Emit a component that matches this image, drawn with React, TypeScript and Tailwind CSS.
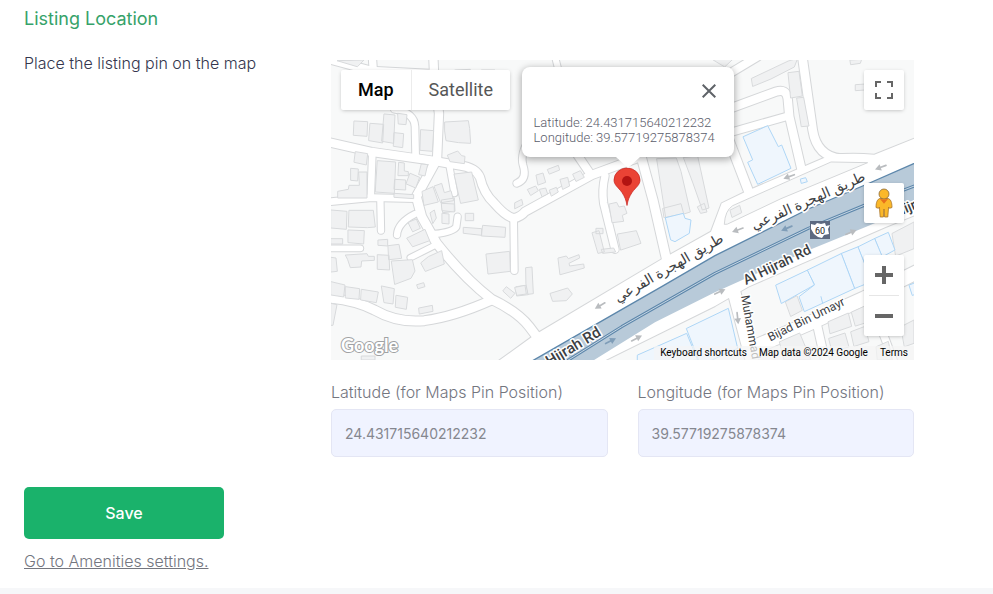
import { useState } from "react";

type Road = { d: string; w: number };

// Street geometry is drawn on a grid three times finer than the map tile.
const roads: Road[] = [
  { d: "M-20 -6 L120 32 L310 42", w: 24 },
  { d: "M124 -10 L127 34", w: 22 },
  { d: "M307 -10 L310 60 L324 160 L318 300", w: 25 },
  { d: "M-10 246 L122 276 L310 303 L385 316 Q435 322 447 352 Q458 400 490 430 Q525 470 548 475 Q570 470 582 455 L782 345 L925 292", w: 25 },
  { d: "M124 280 L119 412", w: 20 },
  { d: "M-10 426 L122 413 L252 416", w: 20 },
  { d: "M148 415 L150 512", w: 19 },
  { d: "M312 308 L256 410 L272 470 L317 550 Q400 655 482 718 Q560 755 595 800 L640 860", w: 27 },
  { d: "M198 525 Q200 488 252 462", w: 19 },
  { d: "M312 522 Q368 515 376 500 L380 470", w: 19 },
  { d: "M238 593 L312 556", w: 17 },
  { d: "M190 148 Q250 158 252 200 L254 290", w: 20 },
  { d: "M356 322 L370 400", w: 18 },
  { d: "M-10 565 L88 565", w: 17 },
  { d: "M-10 714 Q70 720 130 750 Q200 790 280 782 Q370 770 482 720", w: 27 },
  { d: "M548 480 L550 632", w: 20 },
  { d: "M557 370 Q590 358 576 315 Q566 280 600 230", w: 20 },
  { d: "M736 280 L778 342", w: 24 },
  { d: "M822 348 Q812 390 818 430 L852 568", w: 22 },
  { d: "M925 270 L966 420 L1007 600", w: 27 },
  { d: "M1190 230 L1255 400", w: 27 },
  { d: "M1190 148 L1335 95 Q1365 85 1370 115 L1375 170 L1412 330", w: 25 },
  { d: "M1195 218 L1372 168", w: 22 },
  { d: "M1414 -10 L1445 210 Q1458 290 1530 296", w: 26 },
  { d: "M1180 50 L1280 -10", w: 24 },
  { d: "M672 -10 L690 60", w: 18 },
  { d: "M1210 700 L1268 920", w: 38 },
  { d: "M1250 870 L1430 792 L1600 715 L1770 630", w: 42 },
  { d: "M1455 780 L1484 910", w: 24 },
  { d: "M1690 910 L1660 830 Q1640 790 1650 750", w: 22 },
];

const highwayCorridor =
  "M490 912 L612 824 L992 598 L1140 515 L1172 430 L1250 392 L1500 285 Q1560 278 1630 284 L1760 232 L1760 462 L1662 502 L1252 680 L1152 738 L800 912 Z";

const buildings = [
  // north west blocks
  "M70 183l40 2-2 44-40-3z M118 190l40 3-3 56-41-7z M160 162l32 3-4 85-35-6z M190 218l28 3-3 42-27-4z M201 160l27 4-3 30-22-2z",
  "M270 209l38 3-4 62-36-3z M342 186l70-4 4 24 3 44-36-2-38-6-4-28z M350 285l30-12 12 14 10 2-2 22-42-6z",
  "M74 275l36 6-4 34-36-8z M60 325l22 2-2 36-20-2z M84 336h24v78H20v-20l32-6 2-12h30z M140 302l54 4-4 94-56-4z M204 307l16 2v24l12 2v12h-30z M192 358l32 2v30l-34-2z M238 340l28 12-12 32-28-12z M272 312l18 2-8 34-18-4z M370 342l52-6 20 84-52 10z",
  "M274 394l32-14 16 46-42 10z M310 378l22-8 8 28 20-6 8 30-38 6z M332 420l38-6 2 40-36 4z M190 400l58 4v12l-58-4z",
  // west blocks
  "M0 450l48 4-2 54-46-4z M55 451h72l6 50-24 2-56-2z M52 510l48 2-2 40-46-4z M0 536h35v16H0z M0 592l15 2 4 40-19 2z M44 585l64-4 4 8h18v12l-38 2-2 18-32 2-8-24z",
  "M140 584l34 2 2 44-36-2z M172 557l32-4 8 42-38 4z M142 540l28-2v20l-28-2z M182 603l62-4 8 34-12 22-48 18z",
  "M232 487l24-10 12 28-22 10z M228 534l54-26 14 34-50 18z M270 608l22-18 40-18 8 40-56 22z",
  "M0 665l42 10-4 36-38-6z M44 680l42 6-2 32-40-4z M92 688l50 8-6 32-46-8z M152 678l38 8-4 46-26-4z M196 706l34 6-4 36-32-6z M264 744l40-8 2 18-40 8z M258 674l20-6 4 12-20 6z",
  "M332 430l38 2v24l-36-4z M334 460l20 2v30l-20-2z M404 460h24v22h-24z M298 458l12-8 6 24-10 16z M398 502l54 4v20l-54-6z M456 496l68 6-2 30-70-4z M466 582l70-8 2 60-66 8z M516 692l10-12 26 20-12 14z M556 680l30-4 6 28-34 4z",
  // centre blocks
  "M590 388l24-10 8 14-22 14z M616 345l20-6 8 28-22 8z M650 328l32-12 4 14-30 12z M626 388l18-4 6 18-16 8z M656 390l20-8 6 14-20 12z M688 358l22-6 6 26-20 10z M726 342l22-10 12 20-24 12z M552 428l20-10 4 16-24 12z",
  "M835 432l22-5 7 14 16-3 8 22-14 6 4 18-34 4z M860 522l56-10 14 38-60 20z M784 518l20-6 16 64-18 4z M682 594l24-6 6 8 32-12 2 10-32 16 2 8 42-6 2 12-72 20z M585 623l18-2 4 80-16 2-6-30z M552 682l30-6 4 26-28 4z M658 700l52-16 14 18-18 20-40 2z M796 505h20v16h-20z M812 568l36-4 6 12-38 4z",
  "M978 296l58-2 14 40 28 122-72 22z M1058 292l42-4 34 156-20 6-28-80z M996 445l54-14 8 30-58 12z M1100 440l20-10 8 26-18 4z",
  "M1262 55l110-52 28-8-10 26-70 36-54 22z M1372 38l32-4 10 74-34 6z M1398 114l20-2 16 86-22 2z M1574 74l30-2-2 18-28 2z M1558 0l34-2-4 12-28 4z M1198 450l28-14 6 22-28 14z",
  // south east blocks
  "M1364 725l34-18 16 44-34 18z M1684 520l65-34v80l-54 22z M1492 785l60-26 10 40-64 22z M1562 756l44-20 12 48-44 14z M1494 835l48-16 12 42-50 14z M1560 815l42-16 12 46-44 14z M1346 845l60-26 34 81h-80z M1636 860l36-16 12 56h-44z M1710 800l39-20v70l-28 10z",
  "M1148 0l70-14-36 34z M98 0l-80 2 60 18z M372 30l46-2v16h-48z M452 30h40v16h-36z M92 888h40v12H92z M0 730l18 4-12 62H0z",
];

const shops = [
  "M1237 230L1310 197L1342 260L1352 255L1380 325L1280 373L1250 307L1264 300Z",
  "M1004 473L1057 460L1062 475L1080 480L1075 520L1032 545L1020 540Z",
  "M1409 357L1424 353L1429 365L1412 370Z",
  "M1335 675L1430 630L1450 675L1352 730Z",
  "M1430 630L1532 580L1572 685L1420 755L1404 710L1450 675Z",
  "M1532 580L1582 560L1622 665L1572 685Z",
  "M1582 560L1632 535L1665 610L1612 635Z",
  "M1632 535L1672 517L1692 570L1655 590Z",
  "M920 885L1067 820L1100 900L920 915Z",
  "M1067 805L1192 745L1220 865L1110 915Z",
  "M1470 710L1475 730M1735 675L1760 665L1760 700L1745 706Z",
];

// x, y, rotation and colour of the one-way arrows
const arrows: [number, number, number, string][] = [
  [807, 737, 150, "#b9bcbf"],
  [917, 835, -27, "#b9bcbf"],
  [839, 843, -27, "#7f9db8"],
  [1220, 510, 160, "#b9bcbf"],
  [1367, 505, 157, "#7f9db8"],
  [1560, 517, -22, "#b9bcbf"],
  [1167, 695, -25, "#b9bcbf"],
  [1220, 775, 84, "#b9bcbf"],
  [1374, 350, 160, "#b9bcbf"],
  [1649, 322, 160, "#b9bcbf"],
];

function StreetMap() {
  return (
    <svg
      className="absolute inset-0 h-full w-full"
      viewBox="0 0 583 300"
      preserveAspectRatio="xMidYMid slice"
      role="img"
      aria-label="Street map"
    >
      <rect width="583" height="300" fill="#f8f9f9" />
      <g transform="scale(0.33333)" strokeLinejoin="round" strokeLinecap="round">
        <g fill="none" stroke="#d5d7d9">
          {roads.map((r) => (
            <path key={r.d} d={r.d} strokeWidth={r.w + 6} />
          ))}
          <path d={highwayCorridor} strokeWidth="6" />
        </g>
        <g fill="none" stroke="#ffffff">
          {roads.map((r) => (
            <path key={r.d} d={r.d} strokeWidth={r.w} />
          ))}
        </g>
        <path d={highwayCorridor} fill="#ffffff" />
        <path d="M1180 492 Q1182 452 1205 437 L1500 306 L1610 308 L1350 416 L1190 492 Z" fill="#f8f9f9" stroke="#d5d7d9" strokeWidth="3" />
        <g fill="#f0f1f2" stroke="#d8dadc" strokeWidth="3">
          {buildings.map((d) => (
            <path key={d} d={d} />
          ))}
        </g>
        <g fill="#eff6fd" stroke="#aed6f6" strokeWidth="3">
          {shops.map((d) => (
            <path key={d} d={d} />
          ))}
        </g>
        <path
          d="M605 902 L852 760 L992 680 L1152 587 L1432 447 L1602 375 L1760 306 L1760 436 L1602 502 L1442 567 L1152 697 L972 787 L770 912 L600 912 Z"
          fill="#b8cad9"
        />
        <g fill="none" stroke="#5d87ab" strokeWidth="4">
          <path d="M605 902 L852 760 L992 680 L1152 587 L1432 447 L1602 375 L1760 306" />
          <path d="M690 914 L872 800 L1152 640 L1432 505 L1602 435 L1760 374" strokeWidth="9" />
        </g>
        <path d="M690 914 L872 800 L1152 640 L1432 505 L1602 435 L1760 374" fill="none" stroke="#c8d7e4" strokeWidth="3" />
        {arrows.map(([x, y, angle, color]) => (
          <g key={`${x}-${y}`} transform={`translate(${x} ${y}) rotate(${angle})`}>
            <path d="M-17 0H6" stroke={color} strokeWidth="5" />
            <path d="M0-10L18 0L0 10Z" fill={color} />
          </g>
        ))}
      </g>

      <g
        fontFamily="Roboto, 'DejaVu Sans', sans-serif"
        fill="#3c4043"
        stroke="#ffffff"
        strokeWidth="3"
        strokeLinejoin="round"
        paintOrder="stroke"
        textAnchor="middle"
      >
        <text transform="translate(340 212) rotate(-30)" fontSize="14" direction="rtl">طريق الهجرة الفرعي</text>
        <text transform="translate(479 145) rotate(-24)" fontSize="14" direction="rtl">طريق الهجرة الفرعي</text>
        <text transform="translate(448 209) rotate(-26)" fontSize="14" fontWeight="500">Al Hijrah Rd</text>
        <text transform="translate(271 275) rotate(-31)" fontSize="15" fontWeight="500" textAnchor="end">Hijrah Rd</text>
        <text transform="translate(566 157) rotate(-23)" fontSize="14" fontWeight="500" textAnchor="start">Hijrah Rd</text>
        <text transform="translate(477 263) rotate(-26)" fontSize="12">Bijad Bin Umayr</text>
        <text transform="translate(410 236) rotate(80)" fontSize="12" textAnchor="start">Muhammad</text>
      </g>

      <rect x="479" y="161" width="20" height="18" fill="#5c6980" />
      <path d="M480 164l4 1 2-2 4 1 4-1 1 3 4-1-2 4 1 5-5 1-2 3-4-1-4-3-3-5z" fill="#ffffff" />
      <text x="489" y="174" fontFamily="Roboto, sans-serif" fontSize="9" fill="#222222" textAnchor="middle">60</text>

      <path
        d="M296 145.500c-.8-5-2-8.500-5-13-4-5.500-8-7.500-8-12.500a13 12 0 0 1 26 0c0 5-4 7-8 12.500-3 4.500-4.200 8-5 13z"
        fill="#ea4335"
        stroke="#c5221f"
        strokeWidth="0.7"
      />
      <circle cx="296" cy="121" r="5" fill="#b31412" />
    </svg>
  );
}

function Pegman() {
  return (
    <svg width="18" height="30" viewBox="0 0 18 30" aria-hidden="true">
      <path
        d="M5 10.500C2.500 11 1 14 1 19.500l2.500.8.900-1.300.8 10h3.200l.6-8 .6 8h3.200l.8-10 .9 1.300 2.500-.8c0-5.500-1.500-8.500-4-9z"
        fill="#fbb829"
        stroke="#a8742a"
        strokeWidth="0.8"
      />
      <circle cx="9" cy="6" r="5" fill="#fbb829" stroke="#8a6a3a" strokeWidth="0.8" />
      <path d="M4.800 10.800Q9 12 13.200 10.800L9 15.800z" fill="#e8711c" />
    </svg>
  );
}

const controlClass = "flex size-10 items-center justify-center rounded-xs bg-white shadow-[0_1px_4px_-1px_rgba(0,0,0,0.3)]";

function MapPanel({ lat, lng }: { lat: string; lng: string }) {
  return (
    <div className="relative h-[300px] overflow-hidden font-[Roboto,sans-serif]">
      <StreetMap />

      <div className="absolute left-2.5 top-2.5 flex h-10 rounded-xs bg-white text-lg shadow-[0_1px_4px_-1px_rgba(0,0,0,0.3)]">
        <button type="button" className="border-r border-[#ececec] px-[17px] font-medium text-black">Map</button>
        <button type="button" className="px-[17px] text-[#565656]">Satellite</button>
      </div>

      <div className="absolute left-[calc(50%+5px)] top-[7px] w-[212px] -translate-x-1/2">
        <div className="relative h-[90px] rounded-lg bg-white px-3 pt-12 text-[13px] font-light leading-[15px] text-[#5b5d6b] shadow-[0_2px_7px_1px_rgba(0,0,0,0.3)]">
          <button type="button" aria-label="Close" className="absolute right-[18px] top-[17px]">
            <svg width="14" height="14" viewBox="0 0 14 14" stroke="#5f6368" strokeWidth="2" aria-hidden="true">
              <path d="M.7.7l12.600 12.600M13.300.7L.7 13.300" />
            </svg>
          </button>
          <p>Latitude: {lat}</p>
          <p>Longitude: {lng}</p>
        </div>
        <svg className="relative mx-auto block" width="24" height="11" viewBox="0 0 24 11" aria-hidden="true">
          <path d="M0 0H24L12 11Z" fill="#ffffff" />
        </svg>
      </div>

      <button type="button" aria-label="Toggle fullscreen view" className={`${controlClass} absolute right-2.5 top-2.5`}>
        <svg width="18" height="18" viewBox="0 0 18 18" fill="#666666" aria-hidden="true">
          <path d="M0 0v6h2V2h4V0H0zm16 0h-4v2h4v4h2V0h-2zm0 16h-4v2h6v-6h-2v4zM2 12H0v6h6v-2H2v-4z" />
        </svg>
      </button>

      <div className="absolute bottom-6 right-2.5 flex flex-col gap-8">
        <button type="button" aria-label="Street View" className={controlClass}>
          <Pegman />
        </button>
        <div className="flex h-[81px] flex-col items-center rounded-xs bg-white shadow-[0_1px_4px_-1px_rgba(0,0,0,0.3)]">
          <button type="button" aria-label="Zoom in" className="flex size-10 items-center justify-center">
            <svg width="18" height="18" viewBox="0 0 18 18" fill="#666666" aria-hidden="true">
              <path d="M18 7h-7V0H7v7H0v4h7v7h4v-7h7z" />
            </svg>
          </button>
          <div className="h-px w-[30px] bg-[#e6e6e6]" />
          <button type="button" aria-label="Zoom out" className="flex size-10 items-center justify-center">
            <svg width="18" height="18" viewBox="0 0 18 18" fill="#666666" aria-hidden="true">
              <path d="M0 7h18v4H0z" />
            </svg>
          </button>
        </div>
      </div>

      <svg className="absolute bottom-0 left-2" width="66" height="29" viewBox="0 0 66 29">
        <text
          x="2"
          y="21"
          fontFamily="Lato, sans-serif"
          fontSize="18"
          fontWeight="700"
          fill="#ffffff"
          stroke="#a0a2a4"
          strokeWidth="2"
          paintOrder="stroke"
        >
          Google
        </text>
      </svg>

      <div className="absolute bottom-0 right-0 flex h-3.5 items-center text-[10px] leading-[14px] text-black">
        <button type="button" className="bg-[#f5f5f5]/70 px-1.5">Keyboard shortcuts</button>
        <span className="bg-[#f5f5f5]/70 px-1.5">Map data ©2024 Google</span>
        <a href="#terms" className="bg-[#f5f5f5]/70 px-1.5">Terms</a>
      </div>
    </div>
  );
}

type CoordinateFieldProps = {
  id: string;
  label: string;
  value: string;
  onChange: (value: string) => void;
};

function CoordinateField({ id, label, value, onChange }: CoordinateFieldProps) {
  return (
    <div>
      <label htmlFor={id} className="block text-base font-light leading-6 text-[#74767f]">{label}</label>
      <input
        id={id}
        type="text"
        value={value}
        onChange={(e) => onChange(e.target.value)}
        className="mt-[5px] block h-12 w-full rounded-[5px] border border-[#e4e6f4] bg-[#f0f3ff] px-[13px] text-sm text-[#85878f] outline-none"
      />
    </div>
  );
}

export default function App() {
  const [lat, setLat] = useState("24.431715640212232");
  const [lng, setLng] = useState("39.57719275878374");

  return (
    <main className="min-h-screen bg-[#f6f7f9] font-[Inter,sans-serif]">
      <form className="bg-white pb-[15px] pl-6 pr-[79px] pt-[7px]" onSubmit={(e) => e.preventDefault()}>
        <h2 className="text-lg leading-6 text-[#36a269]">Listing Location</h2>

        <div className="mt-[29px] grid grid-cols-[307px_1fr]">
          <p className="-mt-[9px] text-base font-light leading-6 text-[#34364d]">Place the listing pin on the map</p>
          <div>
            <MapPanel lat={lat} lng={lng} />
            <div className="mt-5 grid grid-cols-2 gap-[30px]">
              <CoordinateField id="latitude" label="Latitude (for Maps Pin Position)" value={lat} onChange={setLat} />
              <CoordinateField id="longitude" label="Longitude (for Maps Pin Position)" value={lng} onChange={setLng} />
            </div>
          </div>
        </div>

        <button type="submit" className="mt-[30px] block h-[52px] w-[200px] rounded-[5px] bg-[#1ab26b] text-base font-medium text-white">
          Save
        </button>
        <a href="#amenities" className="mt-2.5 inline-block text-base font-light leading-6 text-[#74767f] underline">
          Go to Amenities settings.
        </a>
      </form>
    </main>
  );
}
